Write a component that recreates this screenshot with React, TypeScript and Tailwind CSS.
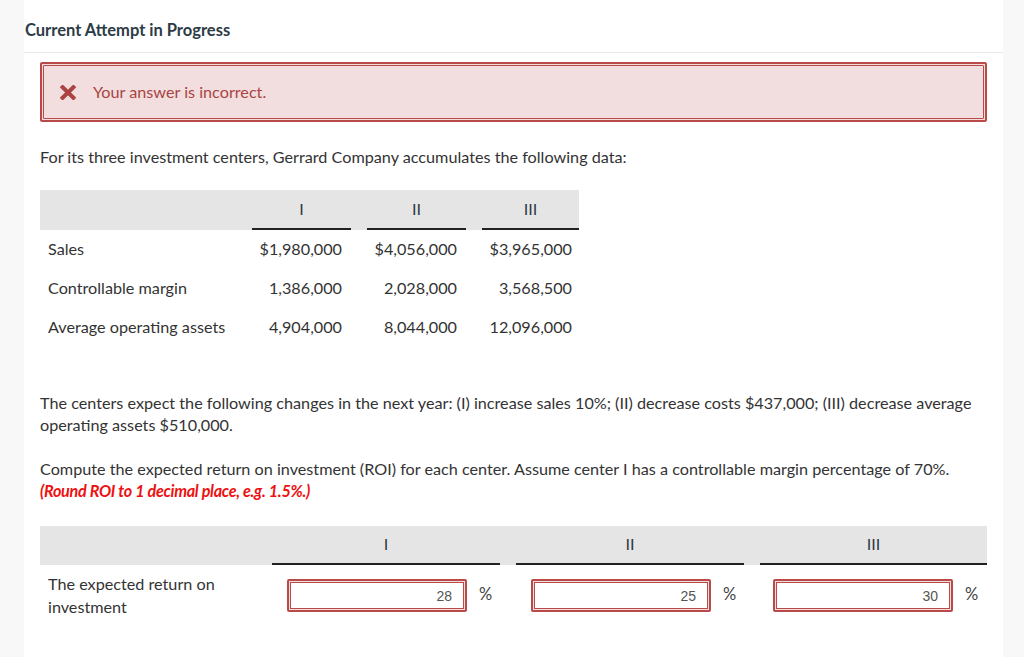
import { useState } from 'react'

const centers = ['I', 'II', 'III']

const rows = [
  { label: 'Sales', values: ['$1,980,000', '$4,056,000', '$3,965,000'] },
  { label: 'Controllable margin', values: ['1,386,000', '2,028,000', '3,568,500'] },
  { label: 'Average operating assets', values: ['4,904,000', '8,044,000', '12,096,000'] },
]

function CrossIcon() {
  return (
    <svg width="16" height="15" viewBox="0 0 16 15" className="shrink-0">
      <path d="M2.6 2.2 L13.4 12.8 M13.4 2.2 L2.6 12.8" stroke="#a94442" strokeWidth="4" strokeLinecap="square" />
    </svg>
  )
}

function AnswerInput({ value }: { value: string }) {
  const [text, setText] = useState(value)
  return (
    <div className="rounded-[2px] border-2 border-[#b94a48] bg-[#f2dede] p-px">
      <input
        value={text}
        onChange={(e) => setText(e.target.value)}
        className="block h-[27px] w-[174px] border border-[#b94a48] bg-white pr-[11px] text-right font-['Liberation_Sans',Arial,sans-serif] text-[14px] text-[#555] outline-none"
      />
    </div>
  )
}

export default function App() {
  return (
    <div className="flex min-h-screen bg-[#f8f8f8] font-['Lato','Open_Sans',sans-serif] text-[16.2px] text-[#333]">
      <div className="ml-[24px] w-[979px] bg-white pb-10">
        <div className="h-[53px] border-b border-[#e9e9e9] pl-[1px] pt-[20px]">
          <h1 className="text-[16.5px] font-bold leading-[21px] text-[#2d3b45]">Current Attempt in Progress</h1>
        </div>

        <div className="px-[16px]">
          <div className="mt-[9px] rounded-[2px] border-2 border-[#b94a48] bg-[#f2dede] p-px">
            <div className="flex h-[54px] items-center gap-[17px] rounded-[1px] border border-[#b94a48] pl-[16px]">
              <CrossIcon />
              <span className="text-[16.2px] text-[#a94442]">Your answer is incorrect.</span>
            </div>
          </div>

          <p className="mt-[24px] leading-[22px]">
            For its three investment centers, Gerrard Company accumulates the following data:
          </p>

          <div className="mt-[22px] w-[539px]">
            <div className="grid h-[40px] grid-cols-[196px_99px_99px_97px] gap-x-[16px] bg-[#e5e5e5]">
              <div />
              {centers.map((c) => (
                <div key={c} className="flex items-center justify-center border-b-2 border-[#222] text-[#2d3b45]">
                  {c}
                </div>
              ))}
            </div>
            {rows.map((r) => (
              <div key={r.label} className="grid h-[39px] grid-cols-[196px_99px_99px_97px] items-center gap-x-[16px]">
                <div className="pl-[8px]">{r.label}</div>
                {r.values.map((v, i) => (
                  <div key={i} className={i === 2 ? 'pr-[7px] text-right' : 'pr-[9px] text-right'}>
                    {v}
                  </div>
                ))}
              </div>
            ))}
          </div>

          <p className="mt-[45px] leading-[22px]">
            The centers expect the following changes in the next year: (I) increase sales 10%; (II) decrease costs
            $437,000; (III) decrease average operating assets $510,000.
          </p>

          <p className="mt-[22px] leading-[22px]">
            Compute the expected return on investment (ROI) for each center. Assume center I has a controllable margin
            percentage of 70%.
            <br />
            <em className="font-bold tracking-[-0.3px] text-[#ee1111]">(Round ROI to 1 decimal place, e.g. 1.5%.)</em>
          </p>

          <div className="mt-[24px]">
            <div className="grid h-[39px] grid-cols-[216px_228px_228px_227px] gap-x-[16px] bg-[#e5e5e5]">
              <div />
              {centers.map((c) => (
                <div key={c} className="flex items-center justify-center border-b-2 border-[#222] text-[#2d3b45]">
                  {c}
                </div>
              ))}
            </div>
            <div className="grid grid-cols-[216px_228px_228px_227px] gap-x-[16px] pt-[14px]">
              <div className="-mt-[7px] pl-[8px] leading-[23px]">
                The expected return on
                <br />
                investment
              </div>
              {['28', '25', '30'].map((v, i) => (
                <div key={i} className={i === 2 ? 'flex items-start pl-[13px]' : 'flex items-start pl-[15px]'}>
                  <AnswerInput value={v} />
                  <span className="ml-[12px] pt-[3px] text-[16.5px] text-[#444]">%</span>
                </div>
              ))}
            </div>
          </div>
        </div>
      </div>
    </div>
  )
}
